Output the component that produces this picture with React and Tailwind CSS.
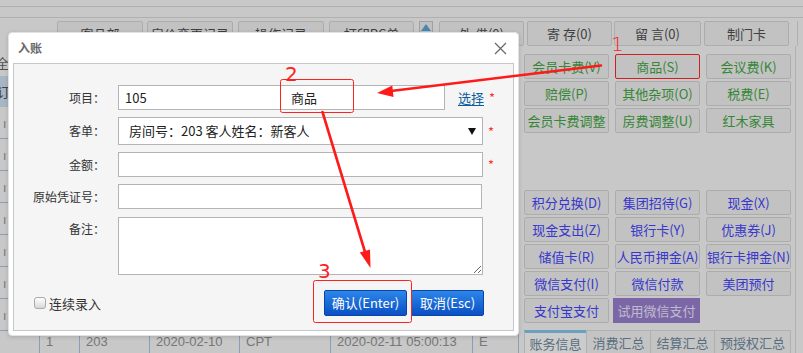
import React from "react";

const topButtons = [
  { label: "客品部", w: "w-[86px]", ml: "ml-[57px]" },
  { label: "房价变更记录", w: "w-[86px]", ml: "ml-[4px]" },
  { label: "操作记录", w: "w-[86px]", ml: "ml-[5px]" },
  { label: "打印RC单", w: "w-[85px]", ml: "ml-[5px]" },
];

const topRight = [
  { label: "外 借(0)", w: "w-[85px]", ml: "ml-[6px]" },
  { label: "寄 存(0)", w: "w-[85px]", ml: "ml-[3px]" },
  { label: "留 言(0)", w: "w-[87px]", ml: "ml-[2px]" },
  { label: "制门卡", w: "w-[85px]", ml: "ml-[3px]" },
];

const consumeItems = [
  "会员卡费(V)",
  "商品(S)",
  "会议费(K)",
  "赔偿(P)",
  "其他杂项(O)",
  "税费(E)",
  "会员卡费调整",
  "房费调整(U)",
  "红木家具",
];

const payItems = [
  "积分兑换(D)",
  "集团招待(G)",
  "现金(X)",
  "现金支出(Z)",
  "银行卡(Y)",
  "优惠券(J)",
  "储值卡(R)",
  "人民币押金(A)",
  "银行卡押金(N)",
  "微信支付(I)",
  "微信付款",
  "美团预付",
  "支付宝支付",
];

const tabs = [
  { label: "账务信息", w: "w-[63px]", active: true },
  { label: "消费汇总", w: "w-[65px]" },
  { label: "结算汇总", w: "w-[65px]" },
  { label: "预授权汇总", w: "w-[77px]" },
];

// cell widths of the ledger table behind the dialog
const cols = ["w-[40px]", "w-[40px]", "w-[70px]", "w-[90px]", "w-[91px]", "w-[142px]", "w-[46px]"];
const lastRow = ["", "1", "203", "2020-02-10", "CPT", "2020-02-11 05:00:13", "E"];

const PageButton = ({ children, className = "" }) => (
  <div
    className={`h-[25px] flex items-center justify-center whitespace-nowrap rounded-[2px] border border-[#d8d8d8] bg-[#f3f3f3] text-[13px] leading-none ${className}`}
  >
    {children}
  </div>
);

const Field = ({ label, children, top = false }) => (
  <div className={`flex ${top ? "items-start" : "items-center"}`}>
    <div className={`w-[91px] shrink-0 text-right text-[12px] leading-[14px] text-[#333] ${top ? "pt-[6px]" : ""}`}>
      {label}
    </div>
    <div className="ml-[13px] flex items-center">{children}</div>
  </div>
);

const Required = () => <span className="ml-[5px] text-[13px] leading-none text-[#ff3030]">*</span>;

export default function App() {
  return (
    <div className="relative w-[803px] h-[353px] overflow-hidden bg-[#fafafa] font-['Noto_Sans_CJK_SC','Noto_Sans',sans-serif] text-[#444]">
      {/* page behind the modal */}
      <div className="h-[7px] border-b border-[#dcdcdc]" />
      <div className="h-[11px] border-b border-[#dcdcdc]" />
      <div className="flex items-start pt-[3px]">
        {topButtons.map((b) => (
          <PageButton key={b.label} className={`${b.w} ${b.ml} text-[#505050]`}>
            {b.label}
          </PageButton>
        ))}
        <div className="ml-[5px] w-[14px] h-[18px] border border-[#c8c8c8] bg-[#f0f0f0] flex justify-center pt-[2px]">
          <svg width="10" height="7" viewBox="0 0 10 7">
            <path d="M5 0 L10 7 L0 7 Z" fill="#5aa8e0" />
          </svg>
        </div>
        {topRight.map((b) => (
          <PageButton key={b.label} className={`${b.w} ${b.ml} text-[#505050]`}>
            {b.label}
          </PageButton>
        ))}
        <div className="ml-auto w-[6px] h-[25px] border-l border-[#dcdcdc]" />
      </div>

      <div className="flex">
        {/* ledger table */}
        <div className="w-[519px] shrink-0 flex flex-col pt-[9px]">
          <div className="h-[15px] -ml-[4px] text-[13px] leading-[15px] text-[#666]">全部</div>
          <div className="mt-[6px] h-[31px] bg-[#d0e4f6] flex items-center -ml-[3px] text-[13px] text-[#555]">订全</div>
          {Array.from({ length: 7 }).map((_, i) => (
            <div key={i} className="h-[32px] flex border-b border-[#a8c8e6]">
              {cols.map((c, j) => (
                <div key={j} className={`${c} h-full border-r border-[#a8c8e6] text-[13px] text-[#999] flex items-center pl-[3px]`}>
                  {j === 0 ? "ı" : ""}
                </div>
              ))}
            </div>
          ))}
          <div className="h-[24px] flex">
            {cols.map((c, j) => (
              <div
                key={j}
                className={`${c} h-full border-r border-[#a8c8e6] text-[13px] leading-[20px] text-[#959595] pl-[6px] pt-[1px] font-['Liberation_Sans','Noto_Sans',sans-serif]`}
              >
                {lastRow[j]}
              </div>
            ))}
          </div>
        </div>

        {/* item & payment buttons */}
        <div className="w-[276px] shrink-0 pl-[5px] pt-[8px]">
          <div className="grid grid-cols-[85px_85px_85px] gap-x-[6px] gap-y-[2px]">
            {consumeItems.map((t) => (
              <PageButton
                key={t}
                className={`text-[#44a844] ${t === "商品(S)" ? "border-[#ff2a2a]" : ""}`}
              >
                {t}
              </PageButton>
            ))}
          </div>
          <div className="mt-[57px] grid grid-cols-[85px_85px_85px] gap-x-[6px] gap-y-[2px]">
            {payItems.map((t) => (
              <PageButton key={t} className="text-[#4646ff]">
                {t}
              </PageButton>
            ))}
            <div className="h-[25px] -ml-[2px] flex items-center justify-center bg-[#9a80d0] text-[13px] text-[#eee8ff] whitespace-nowrap">
              试用微信支付
            </div>
          </div>
          <div className="mt-[7px] flex border-b border-[#dcdcdc]">
            {tabs.map((t) => (
              <div
                key={t.label}
                className={`${t.w} h-[26px] flex items-center justify-center border border-[#dcdcdc] -ml-px first:ml-0 text-[13px] text-[#708ca0] whitespace-nowrap ${
                  t.active ? "bg-white border-t-[3px] border-t-[#86c8ee]" : "bg-[#f6f6f6]"
                }`}
              >
                {t.label}
              </div>
            ))}
          </div>
        </div>
        <div className="flex-1 border-l border-[#dcdcdc]" />
      </div>

      {/* modal mask */}
      <div className="absolute inset-0 bg-black/20" />

      {/* 入账 dialog */}
      <div className="absolute left-[8px] top-[32px] w-[511px] h-[304px] rounded-[4px] bg-white border border-[#e2e2e2] shadow-[0_1px_4px_rgba(0,0,0,0.15)] flex flex-col">
        <div className="h-[30px] shrink-0 flex items-center px-[9px]">
          <span className="text-[12px] font-bold text-[#666]">入账</span>
          <svg className="ml-auto mr-[2px]" width="13" height="13" viewBox="0 0 13 13">
            <path d="M1 1 L12 12 M12 1 L1 12" stroke="#6a6a6a" strokeWidth="1.3" />
          </svg>
        </div>
        <div className="mx-[4px] mb-[4px] flex-1 border border-[#c8c8c8] bg-[#f5f5f5] flex flex-col">
          <div className="pt-[21px] flex flex-col gap-[7px]">
            <Field label="项目：">
              <div className="w-[327px] h-[25px] border border-[#b4b4b4] bg-white flex items-center text-[13px] text-[#222]">
                <span className="w-[172px] pl-[6px]">105</span>
                <span>商品</span>
              </div>
              <span className="ml-[13px] text-[13px] leading-none text-[#0e5c9e] underline underline-offset-2">选择</span>
              <Required />
            </Field>
            <Field label="客单：">
              <div className="w-[365px] h-[28px] border border-[#b4b4b4] bg-white flex items-center pl-[10px] pr-[6px] text-[13px] text-[#222]">
                <span>房间号：203 客人姓名：新客人</span>
                <svg className="ml-auto" width="8" height="7" viewBox="0 0 8 7">
                  <path d="M0 0 L8 0 L4 7 Z" fill="#111" />
                </svg>
              </div>
              <Required />
            </Field>
            <Field label="金额：">
              <div className="w-[365px] h-[25px] border border-[#b4b4b4] bg-white" />
              <Required />
            </Field>
            <Field label="原始凭证号：">
              <div className="w-[364px] h-[25px] border border-[#b4b4b4] bg-white" />
            </Field>
            <Field label="备注：" top>
              <textarea
                readOnly
                className="mt-[1px] w-[365px] h-[58px] border border-[#b4b4b4] bg-white outline-none"
              />
            </Field>
          </div>
          <div className="mt-[15px] flex items-center pl-[20px] pr-[29px]">
            <div className="w-[12px] h-[12px] rounded-[3px] border border-[#a8a8a8] bg-gradient-to-b from-white to-[#d8d8d8]" />
            <span className="ml-[3px] text-[13px] leading-none text-[#333]">连续录入</span>
            <div className="ml-auto flex gap-[4px]">
              <div className="w-[83px] h-[26px] rounded-[2px] border border-[#0b44a8] bg-gradient-to-b from-[#2d86ea] to-[#0b4fc4] flex items-center justify-center text-[13px] text-white whitespace-nowrap">
                确认(Enter)
              </div>
              <div className="w-[73px] h-[26px] rounded-[2px] border border-[#0b44a8] bg-gradient-to-b from-[#2d86ea] to-[#0b4fc4] flex items-center justify-center text-[13px] text-white whitespace-nowrap">
                取消(Esc)
              </div>
            </div>
          </div>
        </div>
      </div>

      {/* tutorial annotations */}
      <svg className="absolute inset-0 pointer-events-none" width="803" height="353" viewBox="0 0 803 353">
        <rect x="280.5" y="79.5" width="73" height="33" rx="2" fill="none" stroke="#ff2020" strokeWidth="1" />
        <rect x="313.5" y="280.5" width="98" height="42" rx="2" fill="none" stroke="#ff2020" strokeWidth="1" />
        <path d="M601 65.5 L391 91" stroke="#ff1a1a" strokeWidth="2.6" strokeLinecap="round" />
        <path d="M377 93 L393.5 97 L392.3 85.5 Z" fill="#ff1a1a" />
        <path d="M322.5 112 L365 252" stroke="#ff1a1a" strokeWidth="2.6" strokeLinecap="round" />
        <path d="M370.5 268 L370 249.4 L359.8 252.4 Z" fill="#ff1a1a" />
      </svg>
      <span className="absolute left-[611px] top-[32px] text-[20px] leading-[24px] text-[#ff2020] font-['DejaVu_Sans',sans-serif] font-light">1</span>
      <span className="absolute left-[285px] top-[62px] text-[20px] leading-[24px] text-[#ff2020] font-['DejaVu_Sans',sans-serif]">2</span>
      <span className="absolute left-[318px] top-[259px] text-[20px] leading-[24px] text-[#ff2020] font-['DejaVu_Sans',sans-serif]">3</span>
    </div>
  );
}
